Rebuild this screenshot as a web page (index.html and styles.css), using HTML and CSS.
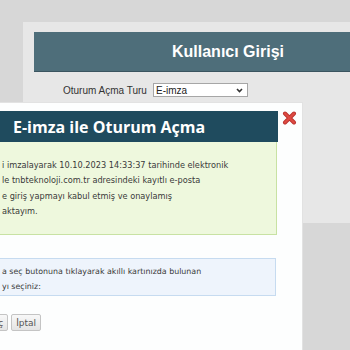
FILE: index.html
```html
<!DOCTYPE html>
<html lang="tr">

<head>
    <meta charset="UTF-8" />
    <title>Kullanıcı Girişi</title>
    <link rel="stylesheet" href="styles.css">
</head>

<body>
    <div class="panel">
        <header class="page-head">
            <h1>Kullanıcı Girişi</h1>
        </header>
        <div class="login-row">
            <label>Oturum Açma Turu</label>
            <div class="select">
                <span>E-imza</span>
                <svg width="7" height="5" viewBox="0 0 7 5"><path d="M1 1 L3.5 3.5 L6 1" fill="none" stroke="#333" stroke-width="1.6"/></svg>
            </div>
        </div>
    </div>

    <div class="modal">
        <div class="modal-head">
            <h2>E-imza ile Oturum Açma</h2>
        </div>
        <a class="close" href="#" title="Kapat">
            <svg width="15" height="14" viewBox="0 0 15 14">
                <path d="M3 2.5 L12 11.5 M12 2.5 L3 11.5" stroke="#b8312d" stroke-width="4" stroke-linecap="round"/>
                <path d="M3 2.5 L12 11.5 M12 2.5 L3 11.5" stroke="#de4a42" stroke-width="2.4" stroke-linecap="round"/>
            </svg>
        </a>

        <div class="note note-green">
            i imzalayarak 10.10.2023 14:33:37 tarihinde elektronik<br>
            le tnbteknoloji.com.tr adresindeki kayıtlı e-posta<br>
            e giriş yapmayı kabul etmiş ve onaylamış<br>
            aktayım.
        </div>

        <div class="note note-blue">
            a seç butonuna tıklayarak akıllı kartınızda bulunan<br>
            yı seçiniz:
        </div>

        <div class="buttons">
            <button>Seç</button>
            <button>İptal</button>
        </div>
    </div>
</body>

</html>
```

FILE: styles.css
```css
body {
    margin: 0;
    background: #d7d7d7;
    font-family: "Liberation Sans", Arial, sans-serif;
    overflow: hidden;
    height: 350px;
}

/* sayfa paneli */
.panel {
    margin: 22px 0 0 23px;
    padding: 10px 0 0 11px;
    width: 420px;
    height: 191px;
    background: #e7e7e7;
}

.page-head {
    width: 388px;
    height: 39px;
    background-color: #4e6e7a;
    border-bottom: 1px solid #3b5560;
    display: flex;
    align-items: center;
    justify-content: center;
}

.page-head h1 {
    margin: 0;
    color: white;
    font-size: 16px;
    font-weight: bold;
}

.login-row {
    display: flex;
    align-items: center;
    gap: 7px;
    margin: 11px 0 0 29px;
}

.login-row label {
    font-size: 10px;
    color: #333;
    width: 83px;
    white-space: nowrap;
}

.select {
    width: 87px;
    height: 12px;
    border: 1px solid #a6a6a6;
    background: #fff;
    display: flex;
    align-items: center;
    justify-content: space-between;
    padding: 0 4px 0 2px;
    box-sizing: content-box;
    font-size: 10px;
    color: #222;
}

/* e-imza penceresi */
.modal {
    position: absolute;
    left: -10px;
    top: 102px;
    width: 311px;
    height: 260px;
    padding-top: 8px;
    background: #fdfefe;
    border: 1px solid #e2e2e2;
    font-family: "DejaVu Sans", Verdana, sans-serif;
}

.modal-head {
    margin-right: 24px;
    height: 31px;
    background-color: #1f4b5e;
    display: flex;
    align-items: center;
    padding-left: 22px;
}

.modal-head h2 {
    margin: 0;
    color: white;
    font-family: "Open Sans", sans-serif;
    font-size: 16px;
    font-weight: bold;
    white-space: nowrap;
}

.close {
    position: absolute;
    right: 5px;
    top: 8px;
    display: block;
    line-height: 0;
}

.note {
    font-size: 8.2px;
    color: #3a3a3a;
    white-space: nowrap;
    padding-left: 10px;
}

.note-green {
    margin-right: 25px;
    height: 76px;
    padding-top: 16px;
    line-height: 15.3px;
    background-color: #eef8dd;
    border: 1px solid #c8e2a3;
    border-top: none;
}

.note-blue {
    margin: 23px 26px 0 0;
    height: 30px;
    padding-top: 6px;
    font-size: 7.9px;
    line-height: 14.5px;
    background-color: #eef4fc;
    border: 1px solid #c6dbf0;
}

.buttons {
    display: flex;
    gap: 3px;
    margin: 18px 0 0 -9px;
}

.buttons button {
    height: 17px;
    padding: 0 4px;
    font-family: "DejaVu Sans", Verdana, sans-serif;
    font-size: 9px;
    color: #555;
    background: linear-gradient(#f8f8f8, #e4e4e4);
    border: 1px solid #c4c4c4;
    border-radius: 2px;
}
```
